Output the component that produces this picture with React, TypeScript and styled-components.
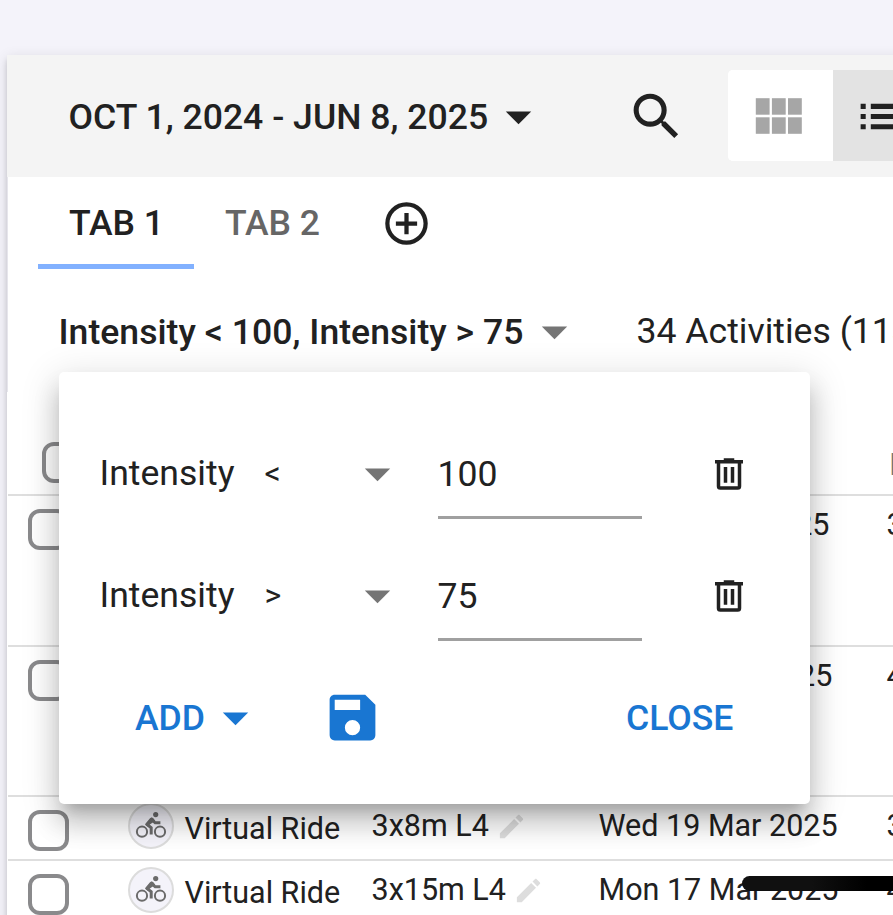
import React from "react";
import styled, { createGlobalStyle } from "styled-components";

const GlobalStyle = createGlobalStyle`
  *, *::before, *::after { box-sizing: border-box; }
  body { margin: 0; background: #f4f3fa; overflow: hidden; }
  button { font: inherit; border: 0; padding: 0; background: none; color: inherit; }
`;

const INK = "#212121";
const BLUE = "#1976d2";

const Page = styled.div`
  width: 893px;
  height: 915px;
  overflow: hidden;
  padding: 55px 0 0 7px;
  background: #f4f3fa;
  color: ${INK};
  font: 400 35.6px/44px Roboto, sans-serif;
  white-space: nowrap;
`;

const Card = styled.main`
  position: relative;
  width: 1000px;
  height: 900px;
  background: #fff;
  box-shadow: 0 8px 3px -5px rgba(0, 0, 0, 0.2), 0 5px 5px rgba(0, 0, 0, 0.14),
    0 3px 13px rgba(0, 0, 0, 0.12);
`;

const Toolbar = styled.header`
  display: flex;
  align-items: center;
  height: 122px;
  padding: 0 0 0 61.5px;
  background: #f4f4f4;
`;

const DateRange = styled.button`
  display: flex;
  align-items: center;
  width: 557.5px;
  font-weight: 500;
`;

const Label = styled.span<{ $drop?: number }>`
  display: block;
  padding-top: ${(p) => p.$drop ?? 2}px;
`;

const Svg = styled.svg<{ $size: number }>`
  display: block;
  flex: none;
  width: ${(p) => p.$size}px;
  height: ${(p) => p.$size}px;
  fill: currentColor;
`;

const ViewToggle = styled.div`
  display: flex;
  height: 91px;
  margin: 0 0 1px 41px;
  border-radius: 5px;
  overflow: hidden;
  background: #fff;
`;

const ToggleButton = styled.button<{ $active?: boolean }>`
  display: flex;
  align-items: center;
  width: 104.5px;
  padding-top: 1px;
  padding-left: ${(p) => (p.$active ? 20 : 27)}px;
  background: ${(p) => (p.$active ? "#e3e3e3" : "#fff")};
  color: ${(p) => (p.$active ? INK : "#a6a6a6")};
`;

const Body = styled.div`
  height: 215px;
  border-left: 1px solid #e6e5ec;
`;

const Tabs = styled.nav`
  display: flex;
  height: 92px;
  padding-left: 30px;
`;

const Tab = styled.button<{ $active?: boolean }>`
  width: 156px;
  padding: 4px 0 0 1px;
  border-bottom: 5px solid ${(p) => (p.$active ? "#82b1ff" : "transparent")};
  color: ${(p) => (p.$active ? INK : "#666")};
  font-weight: 500;
`;

const AddTab = styled.button`
  margin-left: 31px;
  height: 92px;
`;

const FilterBar = styled.div`
  display: flex;
  align-items: center;
  height: 60px;
  margin-top: 32px;
  padding-left: 50.5px;
`;

const FilterButton = styled.button`
  display: flex;
  align-items: center;
  width: 578px;
  font-weight: 500;
  letter-spacing: 0.02px;
`;

const ArrowBox = styled.span<{ $gap?: number }>`
  display: block;
  margin-left: ${(p) => p.$gap ?? 0}px;
  color: #757575;
`;

const Table = styled.section`
  font-size: 30.5px;
  line-height: 36px;
`;

const HeadRow = styled.div`
  display: flex;
  height: 104px;
  margin-left: 1px;
  padding: 50px 0 0 35px;
  border-bottom: 2px solid #dedede;
`;

const HeadLabel = styled.span`
  margin: 5px 0 0 807px;
  color: #757575;
  font-weight: 500;
`;

const Row = styled.div<{ $h: number }>`
  display: grid;
  grid-template-columns: 99px 56.5px 187px 227px 288px 60px;
  height: ${(p) => p.$h}px;
  padding: 12px 0 0 21px;
  margin-left: 1px;
  margin-right: -1px;
  border-bottom: 2px solid #dedede;
`;

const Checkbox = styled.span`
  width: 41px;
  height: 41px;
  margin: 1px 0 0 -1px;
  border: 4px solid #8a8a8c;
  border-radius: 12px;
`;

const HeadCheckbox = styled(Checkbox)`
  margin-top: 0;
`;

const Avatar = styled.span`
  display: flex;
  align-items: center;
  justify-content: center;
  width: 46px;
  height: 46px;
  margin-top: -6px;
  border: 2px solid #dcdcdc;
  border-radius: 50%;
  background: #f4f3fa;
  color: #6b6b6b;
`;

const Kind = styled.span`
  margin-top: 1.5px;
  letter-spacing: -0.02px;
`;

const Cell = styled.span<{ $indent?: number }>`
  display: flex;
  margin-top: -1px;
  padding-left: ${(p) => p.$indent ?? 0}px;
`;

const Pencil = styled.span`
  margin: 3px 0 0 7px;
  color: #ddd;
`;

const Popup = styled.aside`
  position: absolute;
  left: 51.5px;
  top: 316.5px;
  width: 751.5px;
  height: 432.5px;
  padding: 40.5px 0 0 41px;
  border-radius: 5px;
  background: #fff;
  box-shadow: 0 13px 13px -8px rgba(0, 0, 0, 0.2),
    0 20px 25px 3px rgba(0, 0, 0, 0.14), 0 8px 36px 5px rgba(0, 0, 0, 0.12);
`;

const Rule = styled.div`
  display: grid;
  grid-template-columns: 165px 82px 91px 204px 66px 60px;
  align-items: center;
  height: 122px;
`;

const Operator = styled.span`
  font-size: 32px;
  margin-top: -1px;
`;

const Value = styled.div`
  height: 88px;
  margin-top: 4px;
  padding-top: 20.5px;
  border-bottom: 3px solid #a0a0a0;
`;

const Remove = styled.button`
  padding-top: 1px;
`;

const Actions = styled.footer`
  display: flex;
  align-items: center;
  height: 122px;
  padding-left: 35.5px;
  color: ${BLUE};
  font-weight: 500;
`;

const AddButton = styled.button`
  display: flex;
  align-items: center;
  width: 187px;
`;

const CloseButton = styled.button`
  margin-left: 243px;
  padding-top: 2px;
`;

const Redaction = styled.div`
  position: absolute;
  left: 735px;
  top: 821px;
  width: 260px;
  height: 15px;
  border-radius: 8px;
  background: linear-gradient(90deg, #101010 0, #101010 70px, #000 125px);
`;

const PATHS = {
  arrow: "M7,10L12,15L17,10H7Z",
  search:
    "M9.5,3A6.5,6.5 0 0,1 16,9.5C16,11.11 15.41,12.59 14.44,13.73L14.71,14H15.5L20.5,19L19,20.5L14,15.5V14.71L13.73,14.44C12.59,15.41 11.11,16 9.5,16A6.5,6.5 0 0,1 3,9.5A6.5,6.5 0 0,1 9.5,3M9.5,5C7,5 5,7 5,9.5C5,12 7,14 9.5,14C12,14 14,12 14,9.5C14,7 12,5 9.5,5Z",
  list: "M3 13h2v-2H3v2zm0 4h2v-2H3v2zm0-8h2V7H3v2zm4 4h14v-2H7v2zm0 4h14v-2H7v2zM7 7v2h14V7H7z",
  plus: "M12,20C7.59,20 4,16.41 4,12C4,7.59 7.59,4 12,4C16.41,4 20,7.59 20,12C20,16.41 16.41,20 12,20M12,2A10,10 0 0,0 2,12A10,10 0 0,0 12,22A10,10 0 0,0 22,12A10,10 0 0,0 12,2M13,7H11V11H7V13H11V17H13V13H17V11H13V7Z",
  trash:
    "M9,3V4H4V6H5V19A2,2 0 0,0 7,21H17A2,2 0 0,0 19,19V6H20V4H15V3H9M7,6H17V19H7V6M9,8V17H11V8H9M13,8V17H15V8H13Z",
  save: "M15,9H5V5H15M12,19A3,3 0 0,1 9,16A3,3 0 0,1 12,13A3,3 0 0,1 15,16A3,3 0 0,1 12,19M17,3H5C3.89,3 3,3.9 3,5V19A2,2 0 0,0 5,21H19A2,2 0 0,0 21,19V7L17,3Z",
  pencil:
    "M20.71,7.04C21.1,6.65 21.1,6 20.71,5.63L18.37,3.29C18,2.9 17.35,2.9 16.96,3.29L15.12,5.12L18.87,8.87M3,17.25V21H6.75L17.81,9.93L14.06,6.18L3,17.25Z",
};

const Icon = ({ name, size = 61 }: { name: keyof typeof PATHS; size?: number }) => (
  <Svg $size={size} viewBox="0 0 24 24" aria-hidden>
    <path d={PATHS[name]} />
  </Svg>
);

const GridIcon = () => (
  <Svg $size={48} viewBox="0 0 48 48" aria-hidden>
    {[0.8, 16.9, 33].map((x) =>
      [6.2, 25.3].map((y) => (
        <rect key={`${x}-${y}`} x={x} y={y} width="13.8" height="16.5" />
      ))
    )}
  </Svg>
);

const BikeIcon = () => (
  <Svg $size={32} viewBox="0 0 32 32" aria-hidden>
    <g fill="none" stroke="currentColor">
      <circle cx="7" cy="21.7" r="5.1" strokeWidth="2" />
      <circle cx="25" cy="21.7" r="5.1" strokeWidth="2" />
      <path d="M16.2 24.4V17.8L12.3 14.6L16.8 9.6L20.2 12.8H25.4" strokeWidth="3" />
    </g>
    <path d="M10.2 14L15 8.2Q16.8 6.8 18.6 8.4L20.2 10.8L14.2 15L17.2 17.6H14.4Q10.4 15.6 10.2 14Z" />
    <circle cx="20.7" cy="4.6" r="2.6" />
  </Svg>
);

type Activity = { h: number; name: string; date: string; value: string; indent?: number };

const activities: Activity[] = [
  { h: 151, name: "3x10m L4", date: "Thu 27 Mar 2025", value: "3" },
  { h: 150, name: "4x8m L4", date: "Sun 23 Mar 2025", value: "4", indent: 3 },
  { h: 64, name: "3x8m L4", date: "Wed 19 Mar 2025", value: "3" },
  { h: 64, name: "3x15m L4", date: "Mon 17 Mar 2025", value: "4" },
];

const rules = [
  { op: "<", value: "100" },
  { op: ">", value: "75" },
];

export default function App() {
  return (
    <Page>
      <GlobalStyle />
      <Card>
        <Toolbar>
          <DateRange>
            <Label>OCT 1, 2024 - JUN 8, 2025</Label>
            <Icon name="arrow" />
          </DateRange>
          <Icon name="search" />
          <ViewToggle>
            <ToggleButton>
              <GridIcon />
            </ToggleButton>
            <ToggleButton $active>
              <Icon name="list" />
            </ToggleButton>
          </ViewToggle>
        </Toolbar>
        <Body>
          <Tabs>
            <Tab $active>TAB 1</Tab>
            <Tab>TAB 2</Tab>
            <AddTab>
              <Icon name="plus" size={51} />
            </AddTab>
          </Tabs>
          <FilterBar>
            <FilterButton>
              <Label>Intensity &lt; 100, Intensity &gt; 75</Label>
              <ArrowBox $gap={1}>
                <Icon name="arrow" />
              </ArrowBox>
            </FilterButton>
            <span>34 Activities (113h)</span>
          </FilterBar>
        </Body>
        <Table>
          <HeadRow>
            <HeadCheckbox />
            <HeadLabel>Intensity</HeadLabel>
          </HeadRow>
          {activities.map((a) => (
            <Row key={a.date} $h={a.h}>
              <Checkbox />
              <Avatar>
                <BikeIcon />
              </Avatar>
              <Kind>Virtual Ride</Kind>
              <Cell>
                {a.name}
                <Pencil>
                  <Icon name="pencil" size={31} />
                </Pencil>
              </Cell>
              <Cell $indent={a.indent}>{a.date}</Cell>
              <Cell>{a.value}</Cell>
            </Row>
          ))}
        </Table>
        <Popup>
          {rules.map((r) => (
            <Rule key={r.op}>
              <span>Intensity</span>
              <Operator>{r.op}</Operator>
              <ArrowBox>
                <Icon name="arrow" />
              </ArrowBox>
              <Value>{r.value}</Value>
              <span />
              <Remove>
                <Icon name="trash" size={42} />
              </Remove>
            </Rule>
          ))}
          <Actions>
            <AddButton>
              <Label>ADD</Label>
              <Icon name="arrow" />
            </AddButton>
            <Icon name="save" />
            <CloseButton>CLOSE</CloseButton>
          </Actions>
        </Popup>
        <Redaction />
      </Card>
    </Page>
  );
}
